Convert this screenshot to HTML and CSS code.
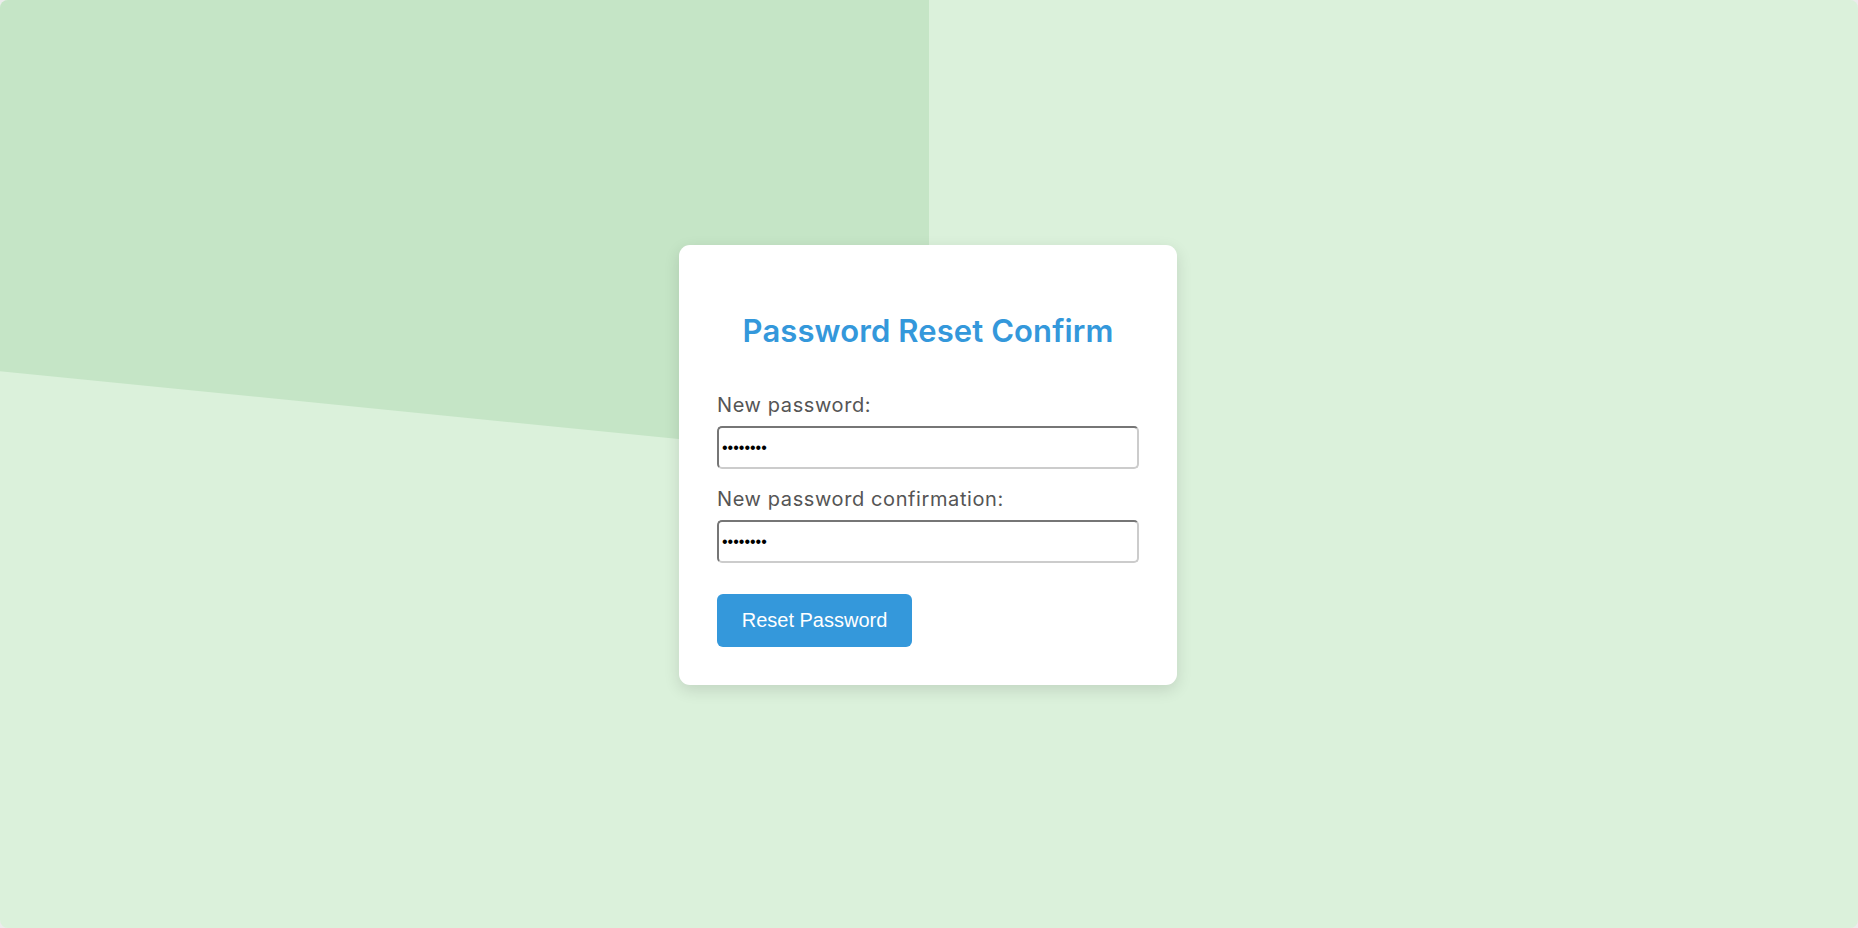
FILE: index.html
```html
<!DOCTYPE html>
<html lang="en">
<head>
<meta charset="utf-8">
<title>Password Reset Confirm</title>
<link rel="stylesheet" href="styles.css">
</head>
<body>
<div class="page">
  <div class="card">
    <h2 class="title">Password Reset Confirm</h2>
    <form class="form" onsubmit="return false;">
      <label class="label" for="p1">New password:</label>
      <input class="input" id="p1" type="password" value="password">
      <label class="label label-second" for="p2">New password confirmation:</label>
      <input class="input" id="p2" type="password" value="password">
      <button class="btn" type="submit">Reset Password</button>
    </form>
  </div>
</div>
</body>
</html>
```

FILE: styles.css
```css
* { box-sizing: border-box; }
html, body { margin: 0; padding: 0; height: 100%; }
body {
  background: #ececec;
  font-family: "Inter", "Noto Sans", sans-serif;
}
.page {
  position: relative;
  height: 100vh;
  background: #dbf1db;
  border-radius: 8px;
  overflow: hidden;
  display: flex;
  align-items: center;
  justify-content: center;
}
.page::before {
  content: "";
  position: absolute;
  left: 0;
  top: 0;
  width: 50%;
  height: 50%;
  background: #c5e5c6;
  clip-path: polygon(0 0, 100% 0, 100% 100%, 0 80%);
}
.card {
  position: relative;
  width: 498px;
  margin-top: 2px;
  margin-right: 2px;
  background: #fff;
  border-radius: 11px;
  padding: 68px 38px 38px;
  box-shadow: 0 5px 16px rgba(0, 0, 0, 0.12);
}
.title {
  margin: 0 0 45px;
  text-align: center;
  color: #3498db;
  font-size: 31px;
  line-height: 35px;
  font-weight: 600;
  letter-spacing: 0.1px;
}
.form { display: flex; flex-direction: column; align-items: stretch; }
.label {
  color: #555;
  font-size: 20px;
  line-height: 24px;
  letter-spacing: 0.6px;
  margin-bottom: 9px;
}
.label-second { margin-top: 18px; }
.input {
  width: 100%;
  height: 43px;
  padding: 0 3px;
  margin: 0;
  font-family: "Liberation Sans", sans-serif;
  font-size: 16px;
  color: #000;
  background: #fff;
  border-style: solid;
  border-width: 2px;
  border-color: #767676 #cccccc #cccccc #767676;
  border-radius: 5px;
  outline: none;
}
.btn {
  align-self: flex-start;
  margin-top: 31px;
  width: 195px;
  height: 53px;
  padding: 0;
  border: none;
  border-radius: 6px;
  background: #3498db;
  color: #fff;
  font-family: "Liberation Sans", Arial, sans-serif;
  font-size: 20px;
  cursor: pointer;
}
```
